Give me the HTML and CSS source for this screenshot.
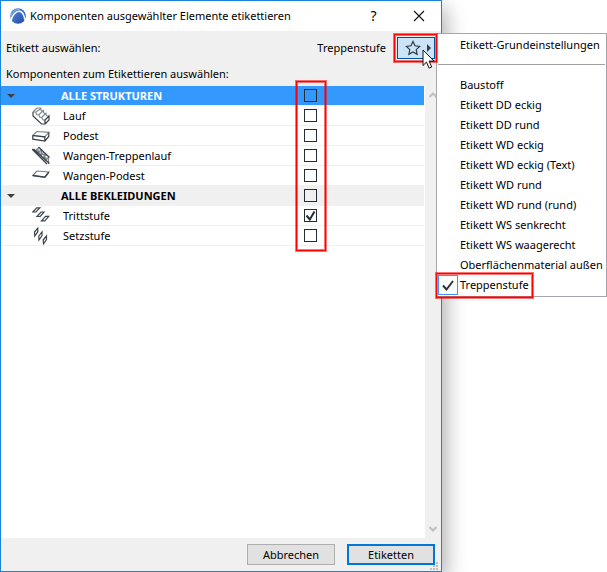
FILE: index.html
```html
<!DOCTYPE html>
<html lang="de">
<head>
<meta charset="utf-8">
<title>Komponenten ausgewählter Elemente etikettieren</title>
<link rel="stylesheet" href="styles.css">
</head>
<body>
<main class="dialog">
  <header class="titlebar">
    <svg class="logo" viewBox="0 0 16 16" aria-hidden="true">
      <defs><linearGradient id="globe" x1="0" y1="0" x2="1" y2="1"><stop offset="0" stop-color="#5f8de0"/><stop offset="1" stop-color="#1c48a8"/></linearGradient></defs>
      <circle cx="8" cy="8" r="7.8" fill="url(#globe)"/>
      <path d="M1 13C2 7 6 2.800 9.500 3.200c3.200.4 4.700 4 5.200 8.500" fill="none" stroke="#fff" stroke-width="1.500"/>
      <path d="M.500 9C2 4 5.500 1.300 9.500 1.300" fill="none" stroke="#9db9ee" stroke-width="1"/>
    </svg>
    <h1 class="title">Komponenten ausgewählter Elemente etikettieren</h1>
    <button class="caption-button" type="button" aria-label="Hilfe">?</button>
    <button class="caption-button close" type="button" aria-label="Schließen">
      <svg viewBox="0 0 12 12" width="12" height="12"><path d="M1 1l10 10M11 1L1 11" stroke="#111" stroke-width="1.100"/></svg>
    </button>
  </header>

  <section class="chooser">
    <span>Etikett auswählen:</span>
    <span class="current">Treppenstufe</span>
    <div class="favorite-wrap">
      <button class="favorite" type="button" aria-label="Favorit wählen">
        <svg viewBox="0 0 36 20" width="36" height="20">
          <path d="M15 3.500l2 4.300 4.600.6-3.400 3.200.9 4.700-4.100-2.300-4.100 2.300.9-4.700-3.400-3.200 4.600-.6z" fill="none" stroke="#303a44" stroke-width="1.200"/>
          <path d="M29 6l4 4-4 4z" fill="#333d47"/>
        </svg>
      </button>
      <svg class="cursor" viewBox="0 0 13 20" aria-hidden="true"><path d="M1 1v15.500l3.500-3.400 2.600 6 2.600-1.100-2.600-5.900H12z" fill="#fff" stroke="#111"/></svg>
      <ul class="menu">
        <li><button type="button">Etikett-Grundeinstellungen</button></li>
        <li class="separator"></li>
        <li><button type="button">Baustoff</button></li>
        <li><button type="button">Etikett DD eckig</button></li>
        <li><button type="button">Etikett DD rund</button></li>
        <li><button type="button">Etikett WD eckig</button></li>
        <li><button type="button">Etikett WD eckig (Text)</button></li>
        <li><button type="button">Etikett WD rund</button></li>
        <li><button type="button">Etikett WD rund (rund)</button></li>
        <li><button type="button">Etikett WS senkrecht</button></li>
        <li><button type="button">Etikett WS waagerecht</button></li>
        <li><button type="button">Oberflächenmaterial außen</button></li>
        <li class="chosen">
          <span class="menu-check"><svg viewBox="0 0 18 18" width="18" height="18"><path d="M4 9.500l3.500 4L14 5" fill="none" stroke="#29333c" stroke-width="2"/></svg></span>
          <button type="button">Treppenstufe</button>
        </li>
      </ul>
    </div>
  </section>

  <p class="caption">Komponenten zum Etikettieren auswählen:</p>

  <section class="list">
    <div class="table-wrap">
      <table class="components">
        <colgroup><col class="col-icon"><col><col class="col-check"><col class="col-rest"></colgroup>
        <tbody>
          <tr class="group selected">
            <td><button class="toggle" type="button" aria-label="Alle Strukturen einklappen"></button></td>
            <th scope="row"><label for="c1">ALLE STRUKTUREN</label></th>
            <td class="check"><input id="c1" type="checkbox"></td><td></td>
          </tr>
          <tr>
            <td><svg class="icon" viewBox="0 0 18 18"><path d="M1 5l4-4h4M1 5h3c0 2 .5 3.500 3 2.500 0 2.500 1 3.500 3 2.500 0 2.500 1 3.500 3 3M9 1c-.5 2.500.5 3.500 2.500 2.500-.3 2.500.5 3.500 2.500 2.800 0 2.200 1 3.200 3 2.700M4 5l5-3.500M7 7.500l4.500-4M10 10l4-3.700" fill="none" stroke="#858c90" stroke-width="1.200"/><path d="M1 5v4l8.500 8h3.500v-4l4-4v4l-4 4" fill="none" stroke="#39434a" stroke-width="1.200"/></svg></td>
            <th scope="row"><label for="c2">Lauf</label></th>
            <td class="check"><input id="c2" type="checkbox"></td><td></td>
          </tr>
          <tr>
            <td><svg class="icon" viewBox="0 0 18 18"><path d="M.800 8.500l4-4 12 .8-4 4.500z" fill="none" stroke="#80878b" stroke-width="1.200"/><path d="M.800 8.500v3.700l12 1.800v-4.200L.800 8.500M12.800 14l4-4.500V5.300" fill="none" stroke="#343e45" stroke-width="1.200"/></svg></td>
            <th scope="row"><label for="c3">Podest</label></th>
            <td class="check"><input id="c3" type="checkbox"></td><td></td>
          </tr>
          <tr>
            <td><svg class="icon" viewBox="0 0 18 18"><path d="M3 4l4-3.500M5.500 6.500l4-4M8 9l4-4M10.500 11.500l4-4M13 14l4-4M4 4h4v3.500h4V11h4M6 1v5.500M9.500 2v7M13 6v7.500M16.500 9v8" fill="none" stroke="#7d8589" stroke-width="1.100"/><path d="M0 2l15 15M1.500 2l16 14.500M6.500 0l11 10.500" fill="none" stroke="#39434a" stroke-width="1.300"/></svg></td>
            <th scope="row"><label for="c4">Wangen-Treppenlauf</label></th>
            <td class="check"><input id="c4" type="checkbox"></td><td></td>
          </tr>
          <tr>
            <td><svg class="icon" viewBox="0 0 18 18"><path d="M.800 8.500l4-4.500 12 1-4 5z" fill="none" stroke="#7c8489" stroke-width="1.200"/><path d="M.800 8.500l12 1.800 4-5" fill="none" stroke="#39434a" stroke-width="1.400"/></svg></td>
            <th scope="row"><label for="c5">Wangen-Podest</label></th>
            <td class="check"><input id="c5" type="checkbox"></td><td></td>
          </tr>
          <tr class="group">
            <td><button class="toggle" type="button" aria-label="Alle Bekleidungen einklappen"></button></td>
            <th scope="row"><label for="c6">ALLE BEKLEIDUNGEN</label></th>
            <td class="check"><input id="c6" type="checkbox"></td><td></td>
          </tr>
          <tr>
            <td><svg class="icon" viewBox="0 0 18 18"><path d="M.800 5l4-4.200h3L4 5zM5 9.500l4-4.500h3L8.200 9.500zM9.500 13.800l4-4.500h3.300l-4 4.500z" fill="#fff" stroke="#3b454b" stroke-width="1.200"/></svg></td>
            <th scope="row"><label for="c7">Trittstufe</label></th>
            <td class="check"><input id="c7" type="checkbox" checked><svg class="tick" viewBox="0 0 13 13" aria-hidden="true"><path d="M2.500 6.500l3.300 4L10.500 2.500" fill="none" stroke="#222d35" stroke-width="2"/></svg></td><td></td>
          </tr>
          <tr>
            <td><svg class="icon" viewBox="0 0 18 18"><path d="M2.500 5L5.800 1.200v3.500L2.800 9zM6.800 9l3.200-4v3.600L7 13zM11.200 13l3.300-4v3.600l-3 4.200z" fill="#fff" stroke="#3b454b" stroke-width="1.200"/></svg></td>
            <th scope="row"><label for="c8">Setzstufe</label></th>
            <td class="check"><input id="c8" type="checkbox"></td><td></td>
          </tr>
        </tbody>
      </table>
      <span class="mark mark-checks"></span>
    </div>
    <div class="scrollbar" aria-hidden="true">
      <svg viewBox="0 0 8 6" width="8" height="6"><path d="M.500 5L4 1.500 7.500 5" fill="none" stroke="#bfbfbf" stroke-width="2"/></svg>
      <svg viewBox="0 0 8 6" width="8" height="6"><path d="M.500 1L4 4.500 7.500 1" fill="none" stroke="#bfbfbf" stroke-width="2"/></svg>
    </div>
  </section>

  <footer class="actions">
    <button class="action" type="button">Abbrechen</button>
    <button class="action default" type="button">Etiketten</button>
    <svg class="grip" viewBox="0 0 8 8" aria-hidden="true"><path d="M6 0h2v2H6zM3 3h2v2H3zM6 3h2v2H6zM0 6h2v2H0zM3 6h2v2H3zM6 6h2v2H6z" fill="#bfbfbf"/></svg>
  </footer>
</main>
</body>
</html>
```
FILE: styles.css
```css
* { box-sizing: border-box; }

body {
  margin: 0;
  padding-right: 165px;
  background: #fff;
  color: #000;
  font: 11px/18px "Noto Sans", "Open Sans", sans-serif;
}

button {
  margin: 0;
  padding: 0;
  border: 0;
  background: none;
  color: inherit;
  font: inherit;
}

svg { display: block; }

.dialog {
  display: flex;
  flex-direction: column;
  min-height: 100vh;
  border: 1px solid #1883d7;
  background: #f0f0f0;
  box-shadow: 4px 8px 20px rgba(0, 0, 0, 0.32);
}

.titlebar {
  display: flex;
  align-items: center;
  height: 30px;
  padding-left: 9px;
  background: #fff;
}

.logo { width: 16px; height: 16px; margin-right: 4px; }

.title {
  flex: 1;
  margin: 0;
  font-size: 11px;
  font-weight: 400;
  white-space: nowrap;
}

.caption-button {
  display: grid;
  place-items: center;
  width: 45px;
  height: 28px;
  font-size: 14px;
}

.chooser {
  display: flex;
  align-items: center;
  height: 34px;
  padding: 0 6px 0 5px;
}

.current { margin-left: auto; margin-right: 11px; }

.favorite-wrap { position: relative; }

.favorite {
  display: block;
  border: 1px solid #005499;
  background: #cce4f7;
}

/* Red frames that point out the relevant controls */
.favorite::after,
.chosen::after,
.mark {
  content: "";
  position: absolute;
  z-index: 3;
  border: 1px solid #f00;
  box-shadow: 0 0 0 1px rgba(255, 0, 0, 0.55), inset 0 0 0 1px rgba(255, 0, 0, 0.55);
  pointer-events: none;
}

.favorite::after { inset: -3px -2px -3px -3px; }

.cursor {
  position: absolute;
  z-index: 4;
  top: 12px;
  left: 25px;
  width: 13px;
  height: 20px;
}

.menu {
  position: absolute;
  z-index: 2;
  top: -4px;
  left: 39px;
  width: 171px;
  margin: 0;
  padding: 1px;
  border: 1px solid #a5a5ab;
  background: #fff;
  list-style: none;
}

.menu li { position: relative; height: 20px; }

.menu button {
  display: block;
  width: 100%;
  height: 20px;
  padding-left: 22px;
  text-align: left;
  white-space: nowrap;
}

.menu .separator::before {
  content: "";
  display: block;
  padding-top: 9px;
  border-bottom: 1px solid #a0a0a0;
}

.menu-check {
  position: absolute;
  top: 0;
  left: 0;
  border: 1px solid #3399ff;
}

.chosen::after { inset: -2px 72px -3px -2px; }

.caption { margin: 0; padding: 0 5px 3px; line-height: 18px; }

.list {
  display: flex;
  flex: 1;
  background: #fff;
}

.table-wrap {
  position: relative;
  flex: 1;
  align-self: flex-start;
}

.components {
  width: 100%;
  table-layout: fixed;
  border-collapse: separate;
  border-spacing: 0;
}

.col-icon { width: 60px; }
.col-check { width: 31px; }
.col-rest { width: 98px; }

.components td,
.components th {
  height: 20px;
  padding: 0;
  border-bottom: 1px solid #f0f0f0;
  font-weight: 400;
  line-height: 18px;
  text-align: left;
  vertical-align: middle;
}

.components th { padding-left: 2px; }
.components .group th { padding-left: 0; font-weight: 700; }
.group { background: #f0f0f0; }
.selected { background: #3399ff; color: #fff; }

.toggle {
  display: block;
  margin-left: 6px;
  border: 4px solid transparent;
  border-top-color: #404040;
  border-bottom: 0;
}

.icon { width: 18px; height: 18px; margin-left: 31px; }

.components .check { position: relative; }

.check input {
  display: block;
  appearance: none;
  width: 13px;
  height: 13px;
  margin: 0 9px;
  border: 1px solid #222d35;
}

.tick {
  position: absolute;
  top: 3px;
  left: 9px;
  width: 13px;
  height: 13px;
  pointer-events: none;
}

.mark-checks { inset: -5px 98px -5px auto; width: 30px; }

.scrollbar {
  display: flex;
  flex-direction: column;
  justify-content: space-between;
  align-items: center;
  width: 17px;
  padding: 6px 0;
  border-left: 1px solid #fff;
  background: #f0f0f0;
}

.actions {
  position: relative;
  display: flex;
  justify-content: flex-end;
  gap: 12px;
  padding: 6px 6px 6px 5px;
}

.action {
  width: 88px;
  height: 21px;
  border: 1px solid #adadad;
  background: #e1e1e1;
}

.action.default { border: 2px solid #0078d7; }

.grip {
  position: absolute;
  right: 3px;
  bottom: 1px;
  width: 8px;
  height: 8px;
}
```
